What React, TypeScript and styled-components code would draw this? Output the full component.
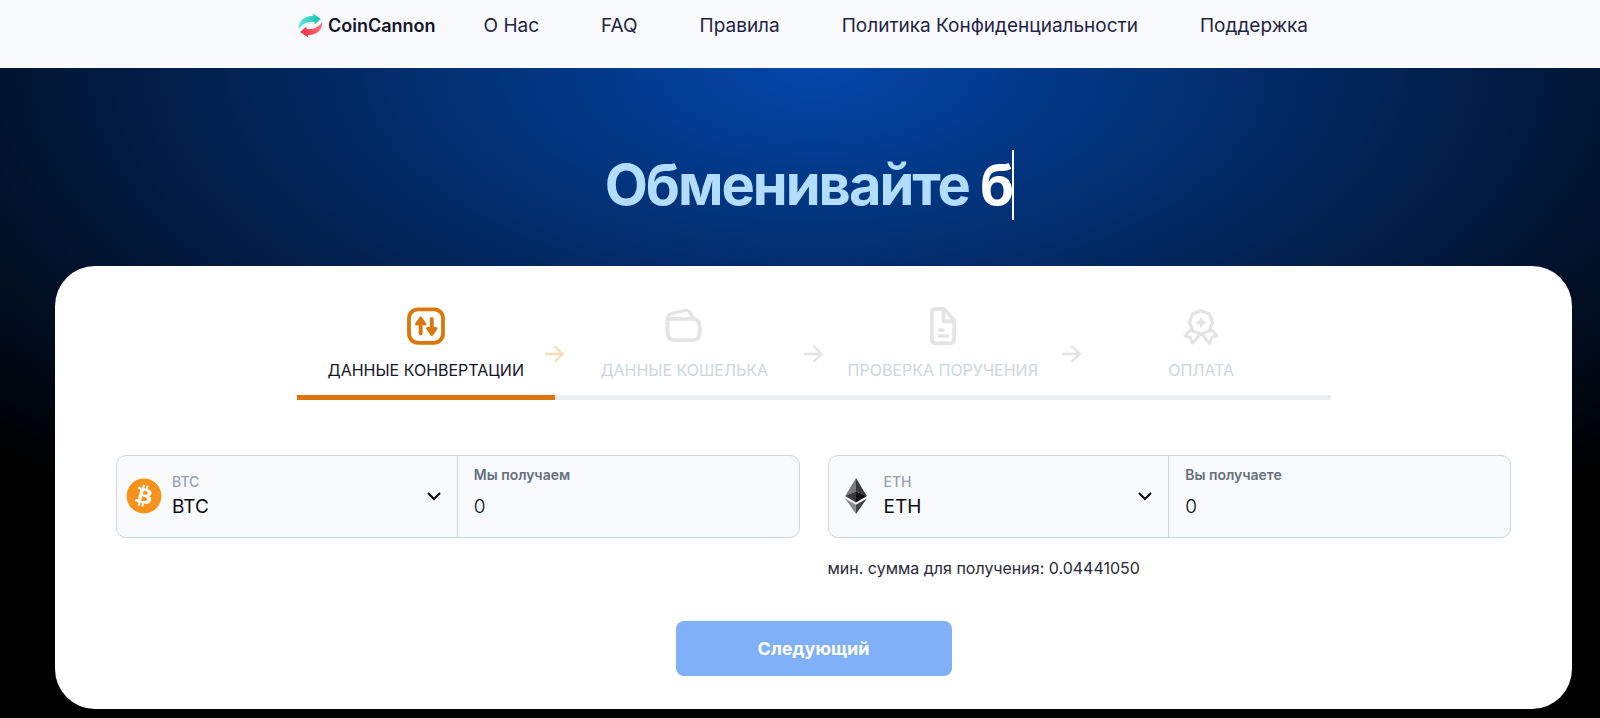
import React from "react";
import styled, { createGlobalStyle } from "styled-components";
import { FaBitcoin } from "react-icons/fa";

const GlobalStyle = createGlobalStyle`
  *, *::before, *::after { box-sizing: border-box; }
  html { background: #000; }
  body {
    margin: 0;
    font-family: Inter, "Liberation Sans", sans-serif;
    color: #14142b;
  }
`;

const Header = styled.header`
  height: 68px;
  padding: 9px 0 0 28px;
  background: #f9fafc;
`;

const HeaderInner = styled.div`
  display: flex;
  align-items: center;
  gap: 48px;
  max-width: 1034px;
  height: 32px;
  margin: 0 auto;
  padding-left: 1px;
  white-space: nowrap;
`;

const Brand = styled.a`
  display: flex;
  align-items: center;
  gap: 5px;
  color: #14142b;
  font-size: 18px;
  font-weight: 600;
  text-decoration: none;
`;

const Nav = styled.nav`
  display: flex;
  gap: 62px;
  padding-top: 2px;
`;

const NavLink = styled.a`
  color: #1f2346;
  font-size: 19px;
  font-weight: 400;
  line-height: 24px;
  text-decoration: none;
`;

const Hero = styled.main`
  padding: 82px 28px 9px 55px;
  background: radial-gradient(71% 550px at 51% 0, #0347aa 0%, #000 100%) #000;
`;

const Title = styled.h1`
  display: flex;
  justify-content: center;
  margin: 0 0 46px;
  padding-right: 8px;
  color: #b2ddff;
  font-size: 56px;
  font-weight: 700;
  line-height: 70px;
  letter-spacing: -2px;
  white-space: pre;
`;

const Typed = styled.span`
  border-right: 2px solid #fff;
  color: #fff;
`;

const Card = styled.form`
  padding: 40px 61px 33px;
  border-radius: 40px;
  background: #fff;
`;

const Steps = styled.ol`
  display: grid;
  grid-template-columns: repeat(4, 1fr);
  max-width: 1034px;
  margin: 0 auto 55px;
  padding: 0;
  list-style: none;
`;

const Step = styled.li<{ $active?: boolean }>`
  display: grid;
  align-items: center;
  height: 94px;
  border-bottom: 5px solid ${(p) => (p.$active ? "#dc7609" : "#ebecf0")};
  color: ${(p) => (p.$active ? "#14142b" : "#d0d5dd")};
  > * { grid-area: 1 / 1; }
`;

const StepBody = styled.div<{ $active?: boolean }>`
  display: flex;
  flex-direction: column;
  align-items: center;
  align-self: start;
  gap: 12px;
  font-size: 16px;
  font-weight: 400;
  line-height: 24px;
  white-space: nowrap;
  svg { color: ${(p) => (p.$active ? "#dc7609" : "#e4e4e4")}; }
`;

const StepArrow = styled.svg<{ $active?: boolean }>`
  justify-self: end;
  margin: 6px -9px 0 0;
  color: ${(p) => (p.$active ? "#fbdcb8" : "#e4e4e4")};
`;

const Exchange = styled.div`
  display: grid;
  grid-template-columns: 1fr 1fr;
  gap: 18px 28px;
`;

const Pair = styled.div`
  display: grid;
  grid-template-columns: 1fr 1fr;
  height: 83px;
  border: 1px solid #d0d5d9;
  border-radius: 10px;
  background: #f9fafc;
  overflow: hidden;
`;

const Currency = styled.div`
  display: grid;
  grid-template-columns: 36px 1fr 16px;
  align-items: center;
  gap: 10px;
  padding: 0 15px 2px 9px;
  border-right: 1px solid #d0d5d9;
`;

const CurrencyText = styled.div`
  display: flex;
  flex-direction: column;
  gap: 2px;
`;

const CurrencyLabel = styled.label`
  color: #98a1ae;
  font-size: 14px;
  font-weight: 500;
  line-height: 20px;
`;

const Select = styled.select`
  appearance: none;
  width: 100%;
  padding: 0;
  border: 0;
  outline: 0;
  background: transparent;
  color: #0a0a14;
  font: 400 19px/26px Inter, "Liberation Sans", sans-serif;
`;

const Amount = styled.div`
  display: flex;
  flex-direction: column;
  gap: 9px;
  padding: 9px 16px;
`;

const AmountLabel = styled.label`
  color: #667080;
  font-size: 14px;
  font-weight: 600;
  line-height: 20px;
`;

const AmountInput = styled.input`
  width: 100%;
  padding: 0;
  border: 0;
  outline: 0;
  background: transparent;
  color: #0a0a14;
  font: 300 19px/26px Inter, "Liberation Sans", sans-serif;
`;

const Note = styled.p`
  grid-column: 2;
  margin: 0;
  color: #2a2a38;
  font-size: 16px;
  font-weight: 400;
  line-height: 24px;
`;

const Submit = styled.button`
  display: block;
  width: 276px;
  height: 55px;
  margin: 41px auto 0;
  border: 0;
  border-radius: 8px;
  background: #80b0f7;
  color: #fff;
  font: 700 18px/24px Inter, "Liberation Sans", sans-serif;
`;

const Coin = styled(FaBitcoin)`
  border-radius: 50%;
  background: #fff;
  color: #f7931a;
`;

const Logo = () => (
  <svg width="25" height="25" viewBox="0 0 25 25" aria-hidden="true">
    <defs>
      <linearGradient id="teal" x1="0" y1="0" x2="1" y2="0">
        <stop offset="0" stopColor="#5ceadb" />
        <stop offset="1" stopColor="#12bfae" />
      </linearGradient>
      <linearGradient id="red" x1="0" y1="0" x2="1" y2="0">
        <stop offset="0" stopColor="#f5233c" />
        <stop offset="1" stopColor="#ff7480" />
      </linearGradient>
    </defs>
    <path d="M.8 16.200C.2 7.500 6.500 2.600 15.500 3L14.500.2 22.800 6 16.500 11.500V9C10 8 4.500 10.500.8 16.200Z" fill="url(#teal)" />
    <path d="M24.200 8.800C24.800 17.500 18.500 22.400 9.500 22L10.500 24.800 2.200 19 8.500 13.500V16C15 17 20.500 14.500 24.200 8.800Z" fill="url(#red)" />
  </svg>
);

const StepSvg = ({ children }: { children: React.ReactNode }) => (
  <svg
    width="40"
    height="40"
    viewBox="0 0 40 40"
    fill="none"
    stroke="currentColor"
    strokeWidth="3.8"
    strokeLinecap="round"
    strokeLinejoin="round"
    aria-hidden="true"
  >
    {children}
  </svg>
);

const ConvertIcon = () => (
  <StepSvg>
    <rect x="3" y="3.300" width="34" height="33.500" rx="9" />
    <path d="M14.700 20V27.500M25.800 13V21" />
    <path d="M14.700 12 10.500 18H18.900ZM25.800 28.500 21.600 22.500H30Z" fill="currentColor" strokeWidth="3" />
  </StepSvg>
);

const WalletIcon = () => (
  <StepSvg>
    <path d="M3.500 13V26.500Q3.500 34.200 11.200 34.200H28Q35.700 34.200 35.700 26.500V20.500Q35.700 12.800 28 12.800H4.500" />
    <path d="M3.500 13Q3.500 8.700 8 7.400L20.500 4.500Q24.500 3.700 26.500 7.500L29.500 12.800" strokeWidth="3.200" />
  </StepSvg>
);

const DocumentIcon = () => (
  <StepSvg>
    <path d="M21 3H13Q8.800 3 8.800 7.200V33Q8.800 37.300 13 37.300H27Q31.200 37.300 31.200 33V14.200L21 3ZM20.500 3.500V15.300H30.500" />
    <path d="M16.500 24H20M16.500 30H24.500" strokeWidth="3.600" />
  </StepSvg>
);

const AwardIcon = () => (
  <StepSvg>
    <path
      strokeWidth="3.200"
      d="M20 4.500 24 6.200 28.300 7.700 30 12 31.500 16.300 29.800 20.500 28.500 25 24 26.500 20 28.500 16 26.500 11.500 25 10.200 20.500 8.500 16.300 10 12 11.700 7.700 16 6.200Z"
    />
    <path strokeWidth="3" d="M9.500 24 3.800 30 9 31.300 11.500 37.300 18 29.500M30.500 24 36.200 30 31 31.300 28.500 37.300 22 29.500" />
    <path d="M20 12Q20.800 15.700 24.500 16.500 20.800 17.300 20 21 19.200 17.300 15.500 16.500 19.200 15.700 20 12Z" fill="currentColor" strokeWidth="1.500" />
  </StepSvg>
);

const EthereumIcon = () => (
  <svg width="36" height="36" viewBox="0 0 36 36" aria-hidden="true">
    <path d="M18 0 7.200 18 18 13.200Z" fill="#7a7a7d" />
    <path d="M18 0 28.800 18 18 13.200Z" fill="#3a3a3d" />
    <path d="M7.200 18 18 13.200V24.400Z" fill="#3b3b3e" />
    <path d="M28.800 18 18 13.200V24.400Z" fill="#111114" />
    <path d="M7.200 20.500 18 26.800V36Z" fill="#8c8c8e" />
    <path d="M28.800 20.500 18 26.800V36Z" fill="#444447" />
  </svg>
);

const Chevron = () => (
  <svg width="16" height="16" viewBox="0 0 16 16" fill="none" stroke="#0a0a14" strokeWidth="2" aria-hidden="true">
    <path d="M2 5 8 11 14 5" />
  </svg>
);

const links = ["О Нас", "FAQ", "Правила", "Политика Конфиденциальности", "Поддержка"];

const steps = [
  { title: "ДАННЫЕ КОНВЕРТАЦИИ", icon: <ConvertIcon /> },
  { title: "ДАННЫЕ КОШЕЛЬКА", icon: <WalletIcon /> },
  { title: "ПРОВЕРКА ПОРУЧЕНИЯ", icon: <DocumentIcon /> },
  { title: "ОПЛАТА", icon: <AwardIcon /> },
];

const pairs = [
  { code: "BTC", label: "Мы получаем", icon: <Coin size={36} /> },
  { code: "ETH", label: "Вы получаете", icon: <EthereumIcon /> },
];

export default function App() {
  return (
    <>
      <GlobalStyle />
      <Header>
        <HeaderInner>
          <Brand href="#">
            <Logo />
            CoinCannon
          </Brand>
          <Nav>
            {links.map((text) => (
              <NavLink key={text} href="#">{text}</NavLink>
            ))}
          </Nav>
        </HeaderInner>
      </Header>
      <Hero>
        <Title>Обменивайте <Typed>б</Typed></Title>
        <Card onSubmit={(e) => e.preventDefault()}>
          <Steps>
            {steps.map(({ title, icon }, i) => (
              <Step key={title} $active={i === 0}>
                <StepBody $active={i === 0}>
                  {icon}
                  {title}
                </StepBody>
                {i < steps.length - 1 && (
                  <StepArrow
                    $active={i === 0}
                    width="20"
                    height="20"
                    viewBox="0 0 20 20"
                    fill="none"
                    stroke="currentColor"
                    strokeWidth="2.4"
                    aria-hidden="true"
                  >
                    <path d="M1 10H18M10.500 2 18.500 10 10.500 18" />
                  </StepArrow>
                )}
              </Step>
            ))}
          </Steps>
          <Exchange>
            {pairs.map(({ code, label, icon }) => (
              <Pair key={code}>
                <Currency>
                  {icon}
                  <CurrencyText>
                    <CurrencyLabel htmlFor={`currency-${code}`}>{code}</CurrencyLabel>
                    <Select id={`currency-${code}`} defaultValue={code}>
                      <option>{code}</option>
                    </Select>
                  </CurrencyText>
                  <Chevron />
                </Currency>
                <Amount>
                  <AmountLabel htmlFor={`amount-${code}`}>{label}</AmountLabel>
                  <AmountInput id={`amount-${code}`} defaultValue="0" inputMode="decimal" />
                </Amount>
              </Pair>
            ))}
            <Note>мин. сумма для получения: 0.04441050</Note>
          </Exchange>
          <Submit type="submit">Следующий</Submit>
        </Card>
      </Hero>
    </>
  );
}
